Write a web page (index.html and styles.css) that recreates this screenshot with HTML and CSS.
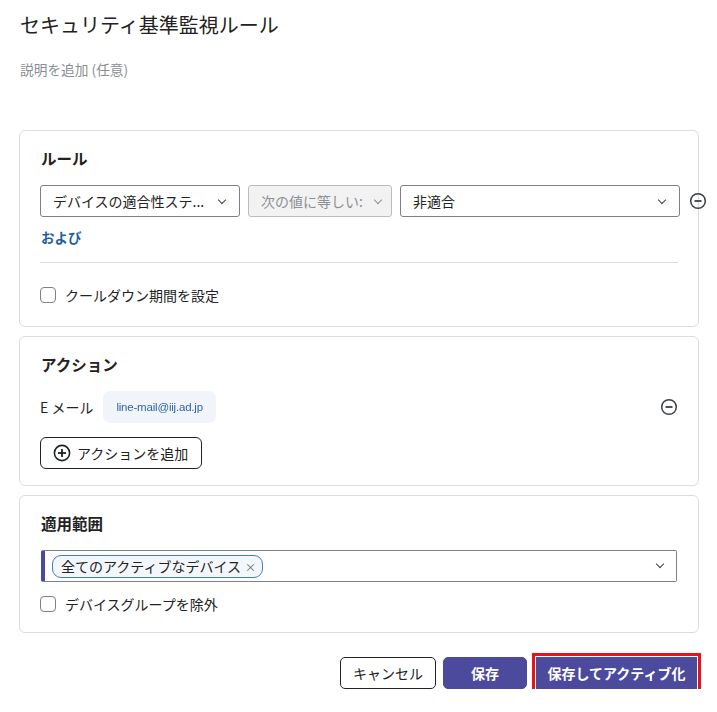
FILE: index.html
```html
<!DOCTYPE html>
<html lang="ja">
  <head>
    <meta charset="UTF-8" />
    <meta name="viewport" content="width=device-width, initial-scale=1.0" />
    <title>セキュリティ基準監視ルール</title>
    <link rel="stylesheet" href="styles.css">
  </head>
  <body>
    <h1 class="title">セキュリティ基準監視ルール</h1>
    <p class="desc">説明を追加 (任意)</p>

    <div class="card">
      <h3>ルール</h3>
      <div class="rule-row">
        <div class="select w1">デバイスの適合性ステ...<span class="chev"></span></div>
        <div class="select w2 disabled">次の値に等しい:<span class="chev"></span></div>
        <div class="select w3">非適合<span class="chev"></span></div>
        <svg class="minus rule-minus" width="18" height="18" viewBox="0 0 18 18">
          <circle cx="9" cy="9" r="7.3" fill="none" stroke="#3a3f47" stroke-width="1.5"/>
          <line x1="5.5" y1="9" x2="12.5" y2="9" stroke="#3a3f47" stroke-width="1.8"/>
        </svg>
      </div>
      <a class="and-link">および</a>
      <hr class="sep">
      <label class="check"><span class="box"></span>クールダウン期間を設定</label>
    </div>

    <div class="card actions">
      <h3>アクション</h3>
      <div class="action-row">
        <span class="action-label">E メール</span>
        <span class="mail-chip"><span class="mail-text">line-mail@iij.ad.jp</span></span>
        <svg class="minus" width="18" height="18" viewBox="0 0 18 18">
          <circle cx="9" cy="9" r="7.3" fill="none" stroke="#3a3f47" stroke-width="1.5"/>
          <line x1="5.5" y1="9" x2="12.5" y2="9" stroke="#3a3f47" stroke-width="1.8"/>
        </svg>
      </div>
      <button class="add-btn">
        <svg width="18" height="18" viewBox="0 0 18 18">
          <circle cx="9" cy="9" r="7.6" fill="none" stroke="#1f2328" stroke-width="1.6"/>
          <line x1="5" y1="9" x2="13" y2="9" stroke="#1f2328" stroke-width="1.8"/>
          <line x1="9" y1="5" x2="9" y2="13" stroke="#1f2328" stroke-width="1.8"/>
        </svg>
        アクションを追加
      </button>
    </div>

    <div class="card scope">
      <h3>適用範囲</h3>
      <div class="multi">
        <span class="tag">全てのアクティブなデバイス<span class="x">×</span></span>
        <span class="chev"></span>
      </div>
      <label class="check"><span class="box"></span>デバイスグループを除外</label>
    </div>

    <div class="footer">
      <button class="btn cancel">キャンセル</button>
      <button class="btn primary">保存</button>
      <button class="btn primary focus">保存してアクティブ化</button>
    </div>
  </body>
</html>
```

FILE: styles.css
```css
body {
  font-family: "Noto Sans CJK JP", "Noto Sans", sans-serif;
  color: #222;
  background-color: #fff;
  margin: 0;
  padding: 0 18px 0 19px;
}

.title {
  font-size: 20px;
  font-weight: 400;
  line-height: 28px;
  margin: 11px 0 0 1px;
}

.desc {
  font-size: 13.7px;
  color: #8a8d92;
  line-height: 20px;
  margin: 20px 0 51px 1px;
}

.card {
  border: 1px solid #dcdcdc;
  border-radius: 6px;
  padding: 16px 20px 21px 20px;
  margin-bottom: 9px;
}

.card h3 {
  font-size: 15.5px;
  font-weight: 700;
  line-height: 22px;
  margin: 0 0 16px 1px;
}

.rule-row {
  display: flex;
  align-items: center;
  gap: 8px;
  margin-right: -30px;
}

.select {
  position: relative;
  flex-shrink: 0;
  height: 32px;
  box-sizing: border-box;
  border: 1px solid #7b8089;
  border-radius: 3px;
  font-size: 14px;
  line-height: 30px;
  padding: 0 30px 0 12px;
  white-space: nowrap;
  overflow: hidden;
}

.w1 { width: 200px; }
.w2 { width: 144px; }
.w3 { width: 280px; }

.select.disabled {
  background-color: #f2f2f2;
  border-color: #b9bcc1;
  color: #8c8f94;
}

.chev {
  position: absolute;
  right: 14px;
  top: 11px;
  width: 5px;
  height: 5px;
  border-right: 1.3px solid #3a3f47;
  border-bottom: 1.3px solid #3a3f47;
  transform: rotate(45deg);
}

.disabled .chev {
  border-color: #8c8f94;
  right: 10px;
}

.rule-minus {
  flex-shrink: 0;
  margin-left: 1px;
}

.and-link {
  display: block;
  color: #1f5f9e;
  font-size: 13.5px;
  font-weight: 700;
  line-height: 20px;
  margin: 10px 0 15px 1px;
}

.sep {
  border: none;
  border-top: 1px solid #dcdcdc;
  margin: 0 0 23px 0;
}

.check {
  display: flex;
  align-items: center;
  font-size: 14px;
  line-height: 18px;
}

.box {
  width: 14px;
  height: 14px;
  border: 1.4px solid #7b8089;
  border-radius: 4px;
  margin-right: 9px;
}

.card:first-of-type {
  padding-bottom: 22px;
}

.card.actions {
  padding-top: 16px;
  padding-bottom: 16px;
}

.action-row {
  display: flex;
  align-items: center;
}

.action-label {
  font-size: 14px;
  margin-right: 10px;
}

.mail-chip {
  background-color: #f1f5f9;
  border-radius: 7px;
  height: 32px;
  padding: 0 13px;
  display: flex;
  align-items: center;
}

.mail-text {
  font-family: "Liberation Sans", sans-serif;
  font-size: 11.5px;
  color: #2d66a6;
  letter-spacing: -0.2px;
  filter: blur(0.6px);
}

.action-row .minus {
  margin-left: auto;
  margin-right: 0;
}

.add-btn {
  display: flex;
  align-items: center;
  gap: 6px;
  margin-top: 14px;
  height: 32px;
  padding: 0 13px 0 12px;
  background: #fff;
  border: 1px solid #1f2328;
  border-radius: 6px;
  font-family: inherit;
  font-size: 14px;
  color: #222;
}

.card.scope {
  padding-bottom: 19px;
}

.multi {
  position: relative;
  height: 32px;
  box-sizing: border-box;
  border: 1px solid #7b8089;
  border-left: 4px solid #4b4a9c;
  border-radius: 2px;
  display: flex;
  align-items: center;
  padding-left: 7px;
  margin: 0 1px 13px 1px;
}

.multi .chev {
  right: 13px;
  top: 10px;
}

.tag {
  border: 1px solid #3f7fc4;
  background-color: #f3f7fb;
  border-radius: 9px;
  font-size: 14px;
  line-height: 20px;
  padding: 0 6px 0 8px;
}

.tag .x {
  font-size: 11px;
  color: #666;
  margin-left: 4px;
}

.footer {
  display: flex;
  justify-content: flex-end;
  align-items: center;
  gap: 7px;
  margin-top: 24px;
  padding-right: 2px;
}

.btn {
  height: 32px;
  border-radius: 5px;
  font-family: inherit;
  font-size: 14px;
  padding: 0;
  white-space: nowrap;
}

.cancel {
  background: #fff;
  border: 1px solid #1f2328;
  color: #222;
  width: 96px;
}

.primary {
  background-color: #4b4a9c;
  border: 1px solid #4b4a9c;
  color: #fff;
  font-weight: 700;
  width: 84px;
}

.primary.focus {
  width: 161px;
  border-radius: 0;
  margin-left: 2px;
  outline: 3px solid #e3141d;
  outline-offset: 1px;
}
```
